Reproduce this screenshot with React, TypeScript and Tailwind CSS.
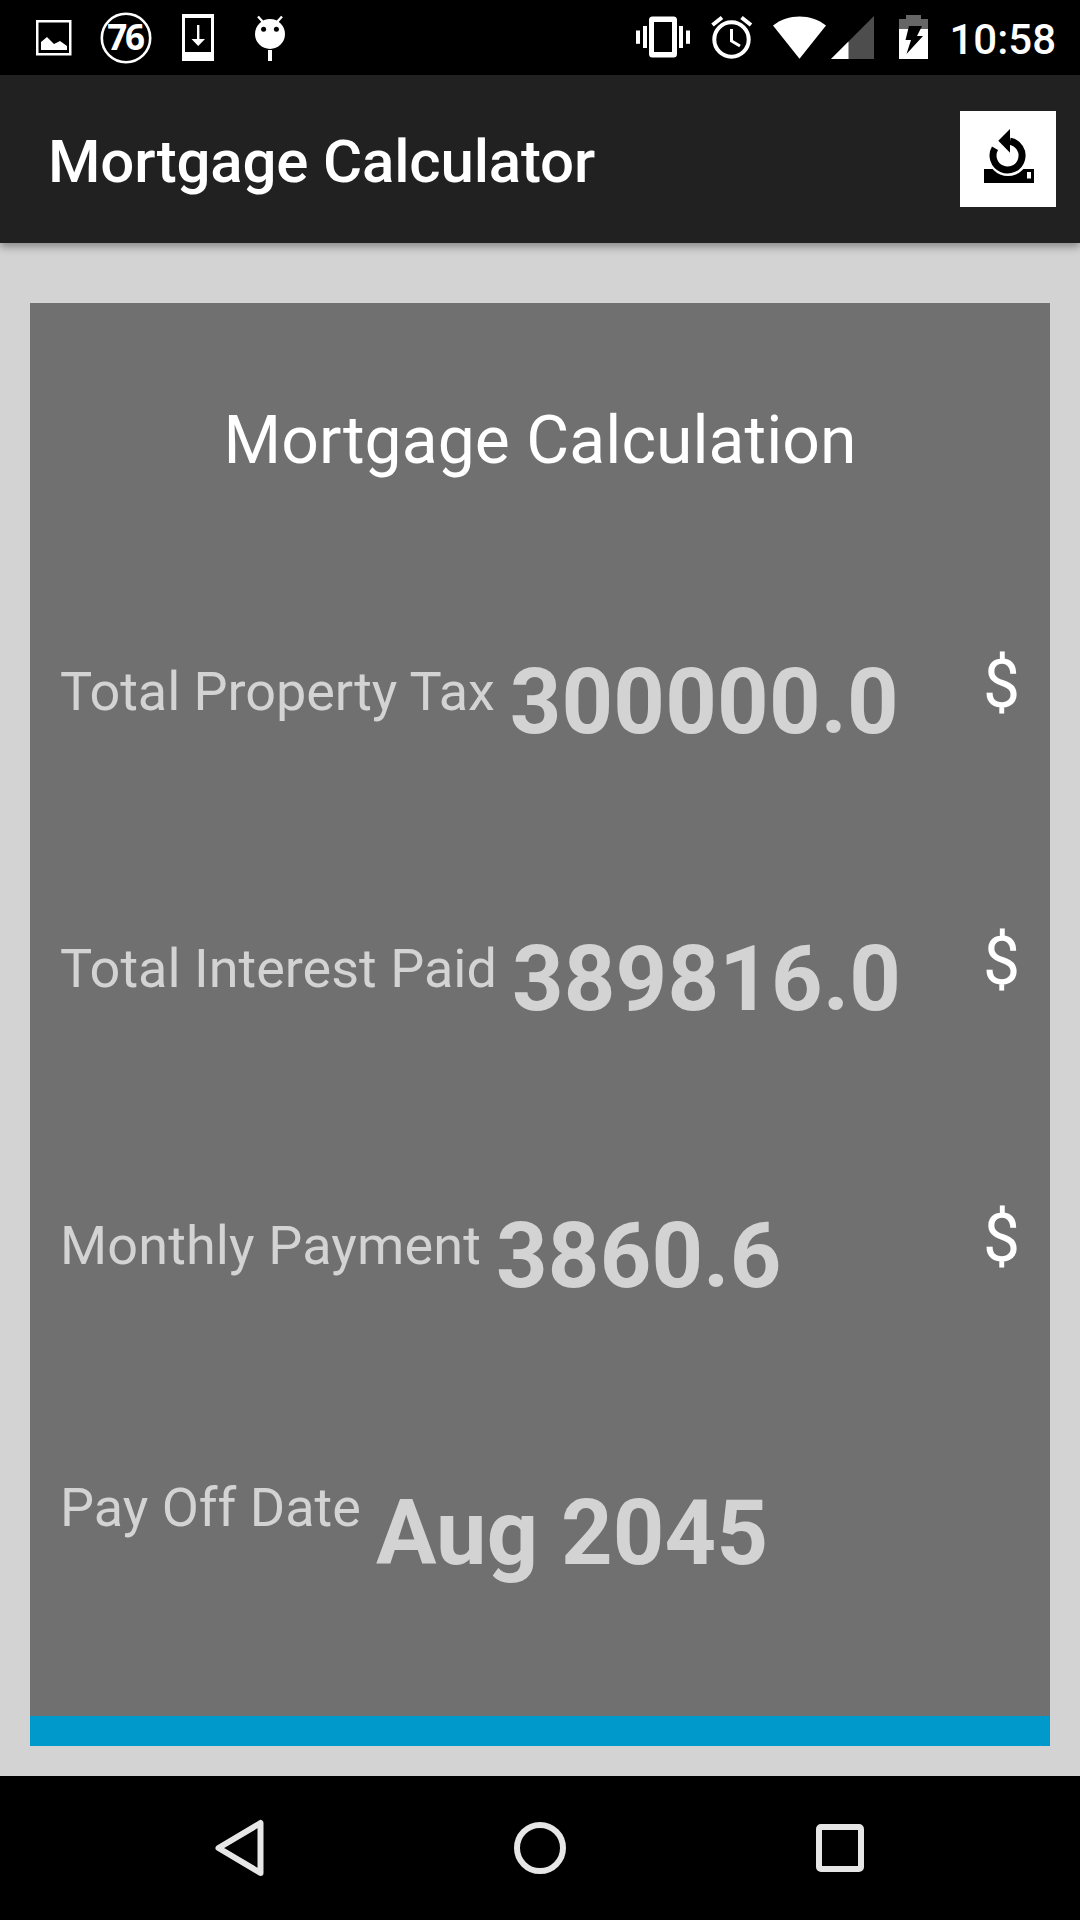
import React from "react";

const rows = [
  { label: "Total Property Tax", value: "300000.0", unit: "$", labelClass: "pt-[60px] tracking-[-0.08px]" },
  { label: "Total Interest Paid", value: "389816.0", unit: "$", labelClass: "pt-[60px]" },
  { label: "Monthly Payment", value: "3860.6", unit: "$", labelClass: "pt-[60px] tracking-[0.13px]" },
  { label: "Pay Off Date", value: "Aug 2045", unit: "", labelClass: "pt-[45px]" },
];

function StatusBar() {
  return (
    <header className="flex h-[75px] items-start justify-between bg-black pr-[24px] pl-[36px] text-white">
      <div className="flex items-start">
        <svg className="h-[75px] w-[36px]" viewBox="0 0 36 75" fill="none">
          <rect x="1.25" y="21.25" width="33" height="33" stroke="white" strokeWidth="2.5" />
          <path d="M5 50V42L11 37L18 44L24 41L31 46V50Z" fill="white" />
        </svg>
        <svg className="ml-[28px] h-[75px] w-[52px]" viewBox="0 0 52 75">
          <circle cx="26" cy="38" r="24.2" fill="none" stroke="white" strokeWidth="2.6" />
          <text x="25" y="50.3" textAnchor="middle" fill="white" fontFamily="'Open Sans', 'Noto Sans', sans-serif" fontWeight="700" fontSize="35" letterSpacing="-2.2">76</text>
        </svg>
        <svg className="ml-[29px] h-[75px] w-[34px]" viewBox="0 0 34 75">
          <path d="M1 14H33V61H1ZM4 18V52H30V18Z" fill="white" fillRule="evenodd" />
          <path d="M16 25H18.4V39H24L17.2 46L10.5 39H16Z" fill="white" />
        </svg>
        <svg className="ml-[40px] h-[75px] w-[30px]" viewBox="0 0 30 75">
          <path d="M3 16.5L8 22M27 16.5L22 22" stroke="white" strokeWidth="2.4" />
          <circle cx="15" cy="34" r="15" fill="white" />
          <circle cx="8.6" cy="29.3" r="2.5" />
          <circle cx="21.4" cy="29.3" r="2.5" />
          <rect x="13" y="50" width="4" height="11" fill="white" />
        </svg>
      </div>
      <div className="flex items-start">
        <svg className="h-[75px] w-[54px]" viewBox="0 0 54 75" fill="white">
          <rect x="0" y="30.5" width="4" height="13.3" />
          <rect x="7" y="26" width="4" height="22" />
          <rect x="43" y="26" width="4" height="22" />
          <rect x="50" y="30.5" width="4" height="13.3" />
          <path d="M16.5 16.5H37.5Q41 16.5 41 20V54Q41 57.5 37.5 57.5H16.5Q13 57.5 13 54V20Q13 16.5 16.5 16.5ZM18 22V52H36V22Z" fillRule="evenodd" />
        </svg>
        <svg className="ml-[21px] h-[75px] w-[42px]" viewBox="0 0 42 75" fill="none" stroke="white">
          <circle cx="20.5" cy="39.5" r="17.2" strokeWidth="4" />
          <path d="M20.5 29V41L29 46" strokeWidth="3" />
          <path d="M1.5 25L11 17.5M30.5 17.5L40 25" strokeWidth="4" />
        </svg>
        <svg className="ml-[20px] h-[75px] w-[54px]" viewBox="0 0 54 75" fill="white">
          <path d="M0 25.5C15 13.5 38 13.5 53 25.5L26.5 58.8Z" />
        </svg>
        <svg className="ml-[4px] h-[75px] w-[43px]" viewBox="0 0 43 75">
          <path d="M0 59L43 16V59Z" fill="#4d4d4d" />
          <path d="M0 59L17.5 41.5V59Z" fill="white" />
        </svg>
        <svg className="ml-[25px] h-[75px] w-[29px]" viewBox="0 0 29 75">
          <path d="M7 15H22V19H29V29H0V19H7Z" fill="#666" />
          <path d="M0 29H29V59H0Z" fill="white" />
          <path d="M10 26H23L18 36H24L7.5 54L12 40H6.5Z" fill="black" />
        </svg>
        <span className="ml-[21px] pt-[15px] text-[42px] leading-[50px] font-medium">10:58</span>
      </div>
    </header>
  );
}

function AppBar() {
  return (
    <div className="relative z-10 flex h-[168px] items-center justify-between bg-[#212121] pr-6 pl-12 shadow-[0_4px_8px_rgba(0,0,0,0.35)]">
      <h1 className="pt-[5px] text-[60px] leading-[70px] font-medium tracking-[-0.17px] text-white">Mortgage Calculator</h1>
      <button className="flex size-[96px] bg-white" aria-label="Reset">
        <svg className="size-[96px]" viewBox="0 0 96 96">
          <path d="M24 58H74V72H24Z" />
          <circle cx="48" cy="44.5" r="20.5" fill="white" />
          <path d="M50 30.2A14.5 14.5 0 1 1 35 37.2" fill="none" stroke="black" strokeWidth="7" />
          <path d="M38.3 29.7L50 18V41.7Z" />
          <rect x="67" y="61" width="4" height="6.5" fill="white" />
        </svg>
      </button>
    </div>
  );
}

function ResultRow({ row }: { row: (typeof rows)[number] }) {
  return (
    <div className="flex h-[277px] items-start pr-[30px] pl-[30px]">
      <span className={`${row.labelClass} text-[54px] leading-[64px] whitespace-nowrap text-[#d3d3d3]`}>{row.label}</span>
      <span className="ml-[15px] pt-[50px] text-[90px] leading-[106px] font-bold tracking-[0.2px] whitespace-nowrap text-[#d3d3d3]">{row.value}</span>
      <span className="ml-auto pt-[46px] text-[66px] leading-[78px] text-white">{row.unit}</span>
    </div>
  );
}

function NavBar() {
  return (
    <nav className="flex h-[144px] items-center justify-center gap-[250px] bg-black pr-[2px]">
      <svg className="h-[60px] w-[50px]" viewBox="0 0 50 60" fill="none" stroke="#e6e6e6" strokeWidth="6" strokeLinejoin="round">
        <path d="M46.5 5V55L4.5 30Z" />
      </svg>
      <svg className="size-[52px]" viewBox="0 0 52 52" fill="none" stroke="#e6e6e6" strokeWidth="6">
        <circle cx="26" cy="26" r="23" />
      </svg>
      <svg className="size-[48px]" viewBox="0 0 48 48" fill="none" stroke="#e6e6e6" strokeWidth="6">
        <rect x="3" y="3" width="42" height="42" rx="2" />
      </svg>
    </nav>
  );
}

export default function App() {
  return (
    <div className="flex h-[1920px] w-[1080px] flex-col overflow-hidden bg-[#d3d3d3] font-['Roboto',sans-serif]">
      <StatusBar />
      <AppBar />
      <main className="flex flex-1 flex-col px-[30px] pt-[60px] pb-[30px]">
        <section className="flex flex-1 flex-col border-b-[30px] border-[#0099cc] bg-[#707070]">
          <h2 className="h-[297px] pt-[99px] text-center text-[66px] leading-[78px] tracking-[0.06px] text-white">Mortgage Calculation</h2>
          {rows.map((row) => (
            <ResultRow key={row.label} row={row} />
          ))}
        </section>
      </main>
      <NavBar />
    </div>
  );
}
